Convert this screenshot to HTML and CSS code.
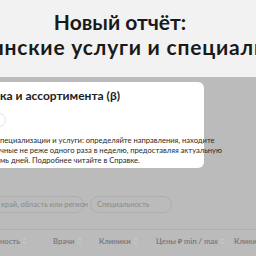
FILE: index.html
```html
<!DOCTYPE html>
<html lang="ru">
<head>
    <meta charset="UTF-8">
    <meta name="viewport" content="width=device-width, initial-scale=1.0">
    <title>Новый отчёт</title>
    <link rel="stylesheet" href="styles.css">
</head>
<body>
    <header class="hero">
        <div class="hero-line">Новый отчёт:</div>
        <div class="hero-line hero-wide">Медицинские услуги и специалисты</div>
    </header>

    <main class="shade">
        <section class="card">
            <h2 class="card-title">ка и ассортимента (β)</h2>
            <div class="toggle"></div>
            <p class="card-text">
                <span>пециализации и услуги: определяйте направления, находите</span>
                <span>чные не реже одного раза в неделю, предоставляя актуальную</span>
                <span>мь дней. Подробнее читайте в Справке.</span>
            </p>
        </section>

        <div class="filters">
            <div class="pill pill-region">край, область или регион</div>
            <div class="pill pill-spec">Специальность</div>
        </div>

        <div class="table-head">
            <span class="col">ность <svg class="sort" viewBox="0 0 6 9"><path d="M1 3.5 3 1.5 5 3.5M1 5.5 3 7.5 5 5.5"/></svg></span>
            <span class="col">Врачи <svg class="sort" viewBox="0 0 6 9"><path d="M1 3.5 3 1.5 5 3.5M1 5.5 3 7.5 5 5.5"/></svg></span>
            <span class="col">Клиники <svg class="sort" viewBox="0 0 6 9"><path d="M1 3.5 3 1.5 5 3.5M1 5.5 3 7.5 5 5.5"/></svg></span>
            <span class="col">Цены ₽ min / max <svg class="sort" viewBox="0 0 6 9"><path d="M1 3.5 3 1.5 5 3.5M1 5.5 3 7.5 5 5.5"/></svg></span>
            <span class="col">Клики</span>
        </div>
    </main>
</body>
</html>
```

FILE: styles.css
```css
body {
    margin: 0;
    width: 256px;
    height: 256px;
    overflow: hidden;
    font-family: 'Lato', 'Noto Sans', sans-serif;
    background-color: #bbbbbb;
}
.hero {
    background-color: #f2f2f2;
    height: 77px;
    padding-top: 9px;
    box-sizing: border-box;
    overflow: hidden;
}
.hero-line {
    display: flex;
    justify-content: center;
    padding-right: 16px;
    white-space: nowrap;
    font-size: 21px;
    line-height: 25px;
    font-weight: 700;
    color: #1a1a1a;
}
.hero-wide {
    letter-spacing: 0.8px;
    padding-right: 32px;
}
.shade {
    padding-top: 5px;
}
.card {
    background-color: #fff;
    width: 204px;
    height: 86px;
    border-radius: 0 6px 6px 0;
    box-sizing: border-box;
    padding-top: 6px;
}
.card-title {
    margin: 0;
    font-size: 12px;
    line-height: 16px;
    font-weight: 700;
    color: #222;
    white-space: nowrap;
}
.toggle {
    width: 12px;
    height: 12px;
    margin: 9px 0 0 -8px;
    border: 1px solid #e2e2e2;
    border-radius: 50%;
}
.card-text {
    margin: 8px 0 0;
    font-size: 7.6px;
    line-height: 10px;
    color: #2a2a2a;
}
.card-text span {
    display: block;
    white-space: nowrap;
}
.filters {
    display: flex;
    gap: 6px;
    margin-top: 28px;
}
.pill {
    height: 17px;
    box-sizing: border-box;
    border: 1px solid #adadad;
    border-radius: 9px;
    font-size: 7.4px;
    line-height: 15px;
    color: #8a8a8a;
    white-space: nowrap;
}
.pill-region {
    width: 104px;
    margin-left: -20px;
    padding-left: 20px;
}
.pill-spec {
    width: 82px;
    padding-left: 6px;
}
.table-head {
    display: grid;
    grid-template-columns: 53px 46px 57px 78px 22px;
    margin-top: 16px;
    border-top: 1px solid #b0b0b0;
    padding-top: 6px;
    font-size: 7.6px;
    line-height: 10px;
    font-weight: 700;
    color: #7c7c84;
    white-space: nowrap;
}
.col {
    display: flex;
    align-items: center;
    gap: 2px;
    overflow: hidden;
}
.sort {
    width: 5px;
    height: 8px;
    flex: none;
    fill: none;
    stroke: #d0d0d0;
    stroke-width: 1;
}
```
